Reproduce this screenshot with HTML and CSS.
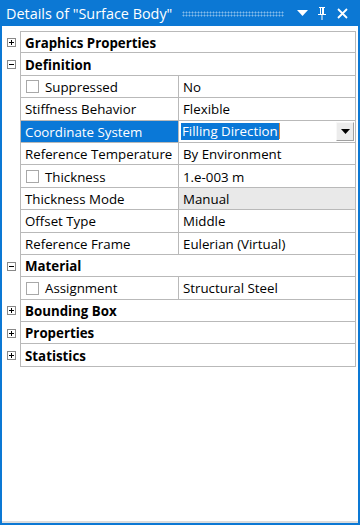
FILE: index.html
```html
<!DOCTYPE html>
<html lang="en">
<head>
    <meta charset="UTF-8">
    <meta name="viewport" content="width=device-width, initial-scale=1.0">
    <title>Details of "Surface Body"</title>
    <link rel="stylesheet" href="styles.css">
</head>
<body>
    <div class="window">
        <div class="titlebar">
            <span class="title">Details of "Surface Body"</span>
            <span class="grip"></span>
            <span class="tb-btn">
                <svg width="11" height="6" viewBox="0 0 11 6"><path d="M0 0H11L5.5 6Z" fill="#fff"/></svg>
            </span>
            <span class="tb-btn">
                <svg width="10" height="13" viewBox="0 0 10 13"><path d="M2 0H8V1H7V7H9V8H5.5V13H4.5V8H1V7H3V1H2Z M4 1V7H5V1Z" fill="#fff" fill-rule="evenodd"/></svg>
            </span>
            <span class="tb-btn">
                <svg width="11" height="11" viewBox="0 0 11 11"><path d="M1 1L10 10M10 1L1 10" stroke="#fff" stroke-width="1.8"/></svg>
            </span>
        </div>
        <div class="content">
            <div class="grid">
                <div class="row group">
                    <span class="exp"><span class="box plus"></span></span>
                    <div class="cell wide">Graphics Properties</div>
                </div>
                <div class="row group">
                    <span class="exp"><span class="box minus"></span></span>
                    <div class="cell wide">Definition</div>
                </div>
                <div class="row">
                    <span class="exp"></span>
                    <div class="cell name"><span class="check"></span>Suppressed</div>
                    <div class="cell value">No</div>
                </div>
                <div class="row">
                    <span class="exp"></span>
                    <div class="cell name">Stiffness Behavior</div>
                    <div class="cell value">Flexible</div>
                </div>
                <div class="row">
                    <span class="exp"></span>
                    <div class="cell name selected">Coordinate System</div>
                    <div class="cell value editing">
                        <span class="sel-text">Filling Direction</span><span class="caret"></span>
                        <span class="drop-btn">
                            <svg width="9" height="5" viewBox="0 0 9 5"><path d="M0 0H9L4.5 5Z" fill="#000"/></svg>
                        </span>
                    </div>
                </div>
                <div class="row">
                    <span class="exp"></span>
                    <div class="cell name">Reference Temperature</div>
                    <div class="cell value">By Environment</div>
                </div>
                <div class="row">
                    <span class="exp"></span>
                    <div class="cell name"><span class="check"></span>Thickness</div>
                    <div class="cell value">1.e-003 m</div>
                </div>
                <div class="row">
                    <span class="exp"></span>
                    <div class="cell name">Thickness Mode</div>
                    <div class="cell value readonly">Manual</div>
                </div>
                <div class="row">
                    <span class="exp"></span>
                    <div class="cell name">Offset Type</div>
                    <div class="cell value">Middle</div>
                </div>
                <div class="row">
                    <span class="exp"></span>
                    <div class="cell name">Reference Frame</div>
                    <div class="cell value">Eulerian (Virtual)</div>
                </div>
                <div class="row group">
                    <span class="exp"><span class="box minus"></span></span>
                    <div class="cell wide">Material</div>
                </div>
                <div class="row">
                    <span class="exp"></span>
                    <div class="cell name"><span class="check"></span>Assignment</div>
                    <div class="cell value">Structural Steel</div>
                </div>
                <div class="row group">
                    <span class="exp"><span class="box plus"></span></span>
                    <div class="cell wide">Bounding Box</div>
                </div>
                <div class="row group">
                    <span class="exp"><span class="box plus"></span></span>
                    <div class="cell wide">Properties</div>
                </div>
                <div class="row group">
                    <span class="exp"><span class="box plus"></span></span>
                    <div class="cell wide">Statistics</div>
                </div>
            </div>
        </div>
    </div>
</body>
</html>
```

FILE: styles.css
```css
body {
    margin: 0;
    padding: 0;
    background-color: #fff;
    font-family: "Open Sans", "Noto Sans", sans-serif;
    font-size: 13.3px;
    color: #000;
}
.window {
    width: 360px;
    height: 525px;
    box-sizing: border-box;
    border: 2px solid #0c78d4;
    border-top: none;
    display: flex;
    flex-direction: column;
    background: #fff;
}
.titlebar {
    height: 26px;
    margin: 0 -2px;
    background-color: #0c78d4;
    color: #fff;
    display: flex;
    align-items: center;
    padding: 0 8px 0 6px;
}
.title {
    font-size: 14.4px;
    white-space: nowrap;
}
.grip {
    flex: 1;
    height: 6px;
    margin: 1px 8px 0 10px;
    background-image: radial-gradient(circle, rgba(255, 255, 255, 0.5) 0.9px, transparent 1.1px);
    background-size: 3px 3px;
}
.tb-btn {
    width: 20px;
    display: flex;
    justify-content: center;
    align-items: center;
}
.content {
    flex: 1;
    padding: 5px 2px 0 0;
    border-bottom: 2px solid #dcdcdc;
}
.row {
    display: flex;
    height: 22.4px;
}
.exp {
    width: 18px;
    flex: none;
    display: flex;
    align-items: center;
    padding-left: 5px;
    box-sizing: border-box;
}
.box {
    width: 9px;
    height: 9px;
    box-sizing: border-box;
    border: 1px solid #888;
    position: relative;
}
.box::before,
.plus::after {
    content: "";
    position: absolute;
    background: #000;
}
.box::before {
    left: 1px;
    top: 3px;
    width: 5px;
    height: 1px;
}
.plus::after {
    left: 3px;
    top: 1px;
    width: 1px;
    height: 5px;
}
.cell {
    display: flex;
    align-items: center;
    box-sizing: border-box;
    border-bottom: 1px solid #b9b9b9;
    padding-left: 4px;
    padding-top: 1px;
    white-space: nowrap;
    overflow: hidden;
}
.row:first-child .cell {
    border-top: 1px solid #b9b9b9;
}
.wide {
    flex: 1;
    border-left: 1px solid #b9b9b9;
    border-right: 1px solid #b9b9b9;
    font-weight: bold;
}
.name {
    width: 159px;
    flex: none;
    border-left: 1px solid #b9b9b9;
    border-right: 1px solid #b9b9b9;
}
.value {
    flex: 1;
    border-right: 1px solid #b9b9b9;
}
.selected {
    background-color: #0a78d7;
    color: #fff;
}
.readonly {
    background-color: #e9e9e9;
}
.check {
    width: 13px;
    height: 13px;
    box-sizing: border-box;
    border: 1px solid #a8a8a8;
    background: #fff;
    margin: 0 6px 0 1px;
    flex: none;
}
.editing {
    padding-left: 2px;
    padding-right: 1px;
    padding-top: 0;
}
.sel-text {
    background-color: #0a78d7;
    color: #fff;
    padding: 0 1px;
    line-height: 17px;
}
.caret {
    width: 1px;
    height: 16px;
    background: #e08a3c;
}
.drop-btn {
    margin-left: auto;
    width: 18px;
    height: 19px;
    box-sizing: border-box;
    background: #ececec;
    border: 1px solid #f8f8f8;
    border-right-color: #a0a0a0;
    border-bottom-color: #a0a0a0;
    display: flex;
    justify-content: center;
    align-items: center;
}
```
